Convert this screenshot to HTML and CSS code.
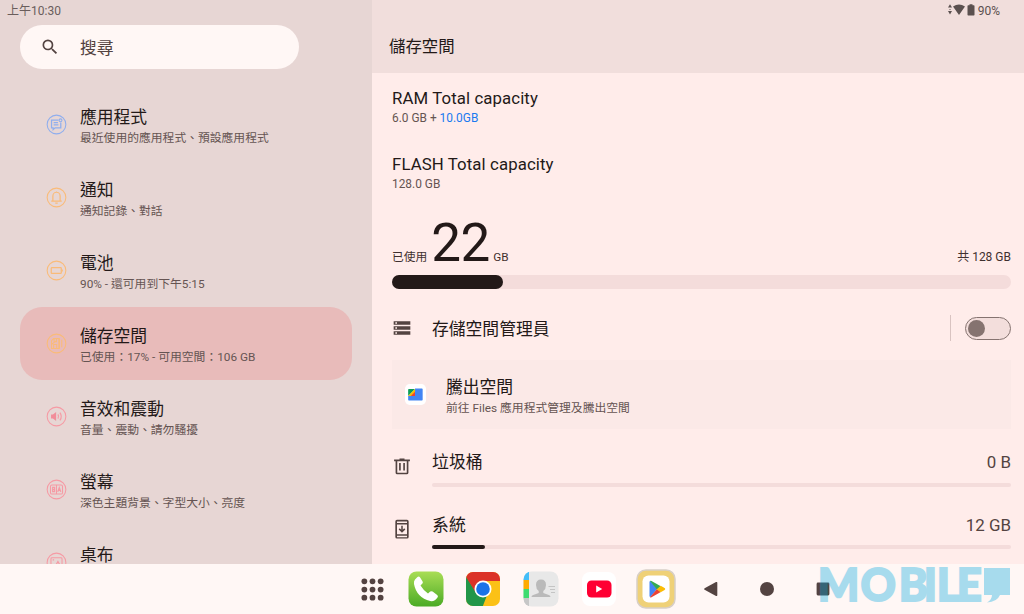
FILE: index.html
```html
<!DOCTYPE html>
<html lang="zh-Hant">
<head>
<meta charset="utf-8">
<title>儲存空間</title>
<link rel="stylesheet" href="styles.css">
</head>
<body>
<div class="screen">
  <div class="panes">
    <aside class="sidebar">
      <div class="status">上午10:30</div>
      <div class="search">
        <svg class="search-icon" viewBox="0 0 24 24"><path d="M15.5 14h-.79l-.28-.27A6.47 6.47 0 0 0 16 9.5 6.5 6.5 0 1 0 9.5 16c1.61 0 3.09-.59 4.23-1.57l.27.28v.79l5 4.99L20.49 19l-4.99-5zm-6 0C7.01 14 5 11.99 5 9.5S7.01 5 9.5 5 14 7.01 14 9.5 11.99 14 9.5 14z"/></svg>
        <span>搜尋</span>
      </div>
      <nav class="menu">
        <div class="item">
          <svg class="ring blue" viewBox="0 0 22 22"><circle cx="11" cy="11" r="9.8"/><path class="mid" d="M13 6.3H5.8v8.2h1.7v1.9l2-1.9h6V9M8 9h4.5M8 11.5h5"/><circle cx="15.2" cy="6.6" r="1.5"/></svg>
          <div><div class="title">應用程式</div><div class="sub">最近使用的應用程式、預設應用程式</div></div>
        </div>
        <div class="item">
          <svg class="ring orange" viewBox="0 0 22 22"><circle cx="11" cy="11" r="9.8"/><path class="mid" d="M5.5 14.8h11M7.2 14.8V9.5a3.8 4 0 0 1 7.6 0v5.3M11 5.5V4.6M9.700 16.800h2.600"/></svg>
          <div><div class="title">通知</div><div class="sub">通知記錄、對話</div></div>
        </div>
        <div class="item">
          <svg class="ring orange" viewBox="0 0 22 22"><circle cx="11" cy="11" r="9.8"/><rect class="mid" x="5.5" y="8" width="10.5" height="6" rx=".7"/><path class="mid" d="M17 10v2"/></svg>
          <div><div class="title">電池</div><div class="sub">90% - 還可用到下午5:15</div></div>
        </div>
        <div class="item selected">
          <svg class="ring orange" viewBox="0 0 22 22"><circle cx="11" cy="11" r="9.8"/><path d="M8 5.8h5.8v10.4H5.8V8zM8.5 6v3.2H11V6M8 16v-4h3.2v4M6 12l5-4"/><path class="mid" d="M13.8 5.8v10.4"/><path d="M16.5 7v8"/></svg>
          <div><div class="title">儲存空間</div><div class="sub">已使用：17% - 可用空間：106 GB</div></div>
        </div>
        <div class="item">
          <svg class="ring pink" viewBox="0 0 22 22"><circle cx="11" cy="11" r="9.8"/><path class="solid" d="M5.300 9h2l3.300-2.700v9.400L7.300 13h-2z"/><path class="mid" d="M12.500 8.800q1.400 2.200 0 4.400M14.600 7q2.800 4 0 8"/></svg>
          <div><div class="title">音效和震動</div><div class="sub">音量、震動、請勿騷擾</div></div>
        </div>
        <div class="item">
          <svg class="ring pink" viewBox="0 0 22 22"><circle cx="11" cy="11" r="9.8"/><rect x="4.7" y="6.2" width="12.6" height="9.6" rx="1.5"/><path d="M11 6.2v9.6"/><path class="mid" d="M7 8.8h2v4.4H7zM7 11h2M12.3 13.5l1.6-4.4 1.6 4.4M13 12h2"/></svg>
          <div><div class="title">螢幕</div><div class="sub">深色主題背景、字型大小、亮度</div></div>
        </div>
        <div class="item">
          <svg class="ring pink" viewBox="0 0 22 22"><circle cx="11" cy="11" r="9.8"/><rect x="5.2" y="6" width="11.6" height="10" rx="1"/><path class="mid" d="M7 8.300h1.500M10.500 13.500l2-3.500 2 3.500"/></svg>
          <div><div class="title">桌布</div></div>
        </div>
      </nav>
    </aside>

    <main class="detail">
      <header class="header">
        <div class="status right">
          <svg class="status-icons" viewBox="0 0 29 14"><path d="M3 1.200 5 4.500H1zM3 11.500 1 8h4zM2.500 6h1v1h-1zM6 3.600Q12-.8 18 3.600L12 12zM22.500 1.200h3v1.100h1.300q.7 0 .7.7v8.800q0 .7-.7.7h-5.600q-.7 0-.7-.7V3q0-.7.7-.7h1.300z"/></svg>
          <span>90%</span>
        </div>
        <h1>儲存空間</h1>
      </header>

      <section class="content">
        <div class="capacity"><div class="title">RAM Total capacity</div><div class="sub">6.0 GB + <span class="extra">10.0GB</span></div></div>
        <div class="capacity"><div class="title">FLASH Total capacity</div><div class="sub">128.0 GB</div></div>

        <div class="usage">
          <span>已使用</span><span class="amount">22</span><span>GB</span><span class="total">共 128 GB</span>
        </div>
        <div class="meter"><div class="meter-fill" style="width:111px"></div></div>

        <div class="manager">
          <svg class="row-icon" viewBox="0 0 24 24"><path d="M2 20h20v-4H2v4zm2-3h2v2H4v-2zM2 4v4h20V4H2zm4 3H4V5h2v2zm-4 7h20v-4H2v4zm2-3h2v2H4v-2z"/></svg>
          <span class="title">存儲空間管理員</span>
          <span class="divider"></span>
          <span class="switch"><span class="knob"></span></span>
        </div>

        <div class="card">
          <svg class="files" viewBox="0 0 22 22"><rect width="22" height="22" rx="5" fill="#fff"/><path d="M10.500 4.700h7.200q.8 0 .8.800v11q0 .8-.8.800H4.100q-.8 0-.8-.8v-4h7.200z" fill="#4285f4"/><path d="M4.100 5.300h6.400L3.300 12.500V6.100q0-.8.800-.8z" fill="#0c9d58"/><path d="M3.300 12.500 10.500 5.300v3.500L6.800 12.500z" fill="#fbbc04"/><path d="M6 12.500 10.500 8v4.500z" fill="#ea4335"/></svg>
          <div><div class="title">騰出空間</div><div class="sub">前往 Files 應用程式管理及騰出空間</div></div>
        </div>

        <div class="category">
          <svg class="row-icon" viewBox="0 0 24 24"><path d="M15 3H9v1.200H2.500v2h1.800V20q0 2 2 2h11.400q2 0 2-2V6.200h1.800v-2H15zm2.700 17H6.300V6.200h11.400zM8.500 8.500h2v9h-2zm5 0h2v9h-2z"/></svg>
          <div class="category-body"><div class="category-line"><span>垃圾桶</span><span>0 B</span></div><div class="bar"></div></div>
        </div>
        <div class="category">
          <svg class="row-icon" viewBox="0 0 24 24"><path d="M18 1H6Q4 1 4 3v18.500q0 2 2 2h12q2 0 2-2V3q0-2-2-2zm0 20.800H6V20h12zm0-3.500H6V6.500h12zM18 4.700H6V2.900h12zM16 12.500l-1.300-1.300-1.800 1.800V8.200h-1.800V13l-1.800-1.800L8 12.500l4 4z"/></svg>
          <div class="category-body"><div class="category-line"><span>系統</span><span>12 GB</span></div><div class="bar"><div class="bar-fill" style="width:53px"></div></div></div>
        </div>
      </section>
    </main>
  </div>

  <footer class="dock">
    <svg class="apps" viewBox="0 0 24 24"><circle cx="3.500" cy="3.500" r="3"/><circle cx="12" cy="3.500" r="3"/><circle cx="20.500" cy="3.500" r="3"/><circle cx="3.500" cy="12" r="3"/><circle cx="12" cy="12" r="3"/><circle cx="20.500" cy="12" r="3"/><circle cx="3.500" cy="20.500" r="3"/><circle cx="12" cy="20.500" r="3"/><circle cx="20.500" cy="20.500" r="3"/></svg>

    <svg class="app" viewBox="0 0 36 36"><defs><linearGradient id="phone" x2="0" y2="1"><stop stop-color="#a9dd55"/><stop offset="1" stop-color="#4bab25"/></linearGradient></defs><rect x=".5" y=".5" width="35" height="35" rx="8" fill="url(#phone)"/><path d="M7 8.500 9.500 6q1.500-1 2.600.5l2.500 4q.7 1.300-.4 2.300l-1.700 1.600q3.200 5.200 7.500 8l2.200-1.800q1.200-.9 2.400 0l4.600 3.300q1.400 1.200.3 2.600-2.700 4.300-7.300 3.600Q8.500 26.500 6 13q-.4-3 1-4.500z" fill="#fff"/></svg>

    <svg class="app" viewBox="0 0 36 36"><defs><clipPath id="tile"><rect x="1" y="1" width="34" height="34" rx="7"/></clipPath></defs><g clip-path="url(#tile)"><path d="M0 0h36v36H0z" fill="#fbc116"/><path d="M1 5 12 23l10.500 0L17.500 36H0V5z" fill="#229648"/><path d="M0 0h36v10H18l-7 12L1 6z" fill="#db3228"/></g><circle cx="18" cy="18" r="8.500" fill="#fff"/><circle cx="18" cy="18" r="6.800" fill="#1a73e8"/></svg>

    <svg class="app" viewBox="0 0 36 36"><defs><clipPath id="book"><rect x=".5" y=".5" width="35" height="35" rx="8"/></clipPath></defs><g clip-path="url(#book)"><path d="M0 0h36v36H0z" fill="#e8e8e8"/><path d="M0 0h6v9H0z" fill="#42bdf8"/><path d="M0 9h6v9H0z" fill="#ffab00"/><path d="M0 18h6v9H0z" fill="#3ddc70"/><path d="M0 27h6v9H0z" fill="#c7c7c7"/></g><path d="M13 14q0-5.500 5-5.500t5 5.500q0 4-2.700 6v2l5.500 2q1.700.7 1.700 2H8.500q0-1.300 1.700-2l5.500-2v-2Q13 18 13 14z" fill="#bababa"/><path d="M25.500 15.500H32M27 18.500h5M28 21.500h4" stroke="#c4c4c4" stroke-width="1.200"/></svg>

    <svg class="app" viewBox="0 0 36 36"><rect x="1" y="1" width="34" height="34" rx="8" fill="#fff"/><rect x="6" y="9.500" width="24.500" height="17" rx="4.500" fill="#ff0033"/><path d="M15.200 14.500v7l6-3.500z" fill="#fff"/></svg>

    <svg class="play" viewBox="0 0 40 40"><rect x="1" y="1" width="38" height="38" rx="9" fill="#efd177" stroke="#d8cfc6" stroke-width="1.500"/><rect x="6.500" y="6.500" width="27" height="27" rx="6" fill="#fff"/><path d="M13.500 13v14q.3 1.400 1 1L21 20l-6.500-8q-.8-.2-1 1z" fill="#4285f4"/><path d="M14 12q.6-.3 1.500.1l9.300 5.200-3.800 3.400z" fill="#34a853"/><path d="m14 28.300 7-8.300 3.800 3.100-9.300 5.200q-.9.400-1.500 0z" fill="#ea4335"/><path d="m20.800 20.200 3.900-3.400 3.900 2.300q1.400 1 0 1.900l-3.900 2.300z" fill="#fbbc04"/></svg>

    <svg class="nav" viewBox="0 0 14 14"><path d="M.6 6.200 12 0q1.300-.4 1.300 1v12q0 1.400-1.300 1L.6 7.800Q-.4 7 .6 6.200z"/></svg>
    <svg class="nav" viewBox="0 0 14 14"><circle cx="7" cy="7" r="7"/></svg>
    <svg class="nav" viewBox="0 0 14 14"><rect x=".6" y=".6" width="12.800" height="12.800" rx="1.300"/></svg>

    <svg class="watermark" viewBox="0 0 212 50"><g transform="scale(.95 1)"><text y="37.300" x="6.100 51 91.400 117.700 131.400 152.400">MOBILE</text></g><path d="M172 4h26v27h-10q-3 7-13 7.500 5-3 5-7.500h-8z"/></svg>
  </footer>
</div>
</body>
</html>
```

FILE: styles.css
```css
* { box-sizing: border-box; }
body { margin: 0; font-family: Roboto, "Noto Sans CJK TC", sans-serif; color: #231918; }
.screen { width: 1024px; height: 614px; overflow: hidden; display: flex; flex-direction: column; background: #fff7f5; }
.panes { height: 564px; display: flex; overflow: hidden; }

.sidebar { width: 372px; flex: none; background: #e7d6d4; padding: 0 20px; }
.status { height: 25px; padding-top: 2px; margin-left: -13px; font-size: 12px; line-height: 18px; color: #6a5d5c; }
.search { width: 279px; height: 43.500px; border-radius: 22px; background: #fff7f5; display: flex; align-items: center; gap: 20px; padding-left: 20px; font-size: 16.800px; color: #534341; }
.search-icon { width: 20px; height: 20px; fill: #534341; }
.menu { padding-top: 19px; }
.item { height: 73.150px; display: flex; padding: 18px 0 0 26px; gap: 13px; border-radius: 22px; }
.selected { background: #e8bbba; }
.title { font-size: 16.800px; line-height: 23px; white-space: nowrap; }
.sub { font-size: 11.800px; line-height: 18px; color: #655452; white-space: nowrap; }
.ring { width: 21px; height: 21px; flex: none; margin-top: 8px; fill: none; stroke-width: 1.100; }
.ring .mid { stroke-width: 1.300; }
.blue { stroke: #8faeee; }
.orange { stroke: #fabb78; }
.pink { stroke: #f69aa4; }
.pink .solid { fill: #f28d99; stroke: none; }

.detail { flex: 1; background: #ffecea; }
.header { height: 73px; background: #f1dedc; padding-left: 17px; }
.right { margin: 0; display: flex; justify-content: flex-end; padding-right: 24px; gap: 2px; color: #5b504f; }
.status-icons { width: 29px; height: 14px; margin-top: 1px; fill: #5b504f; }
h1 { margin: 8px 0 0; font-size: 16.400px; line-height: 27px; font-weight: 400; }
.content { padding: 0 13px 0 20px; }
.capacity { height: 65.500px; padding-top: 14px; }
.capacity .title { letter-spacing: .1px; }
.capacity .sub { line-height: 16px; font-size: 11.900px; }
.extra { color: #1a7af0; }
.usage { height: 71px; padding-top: 9px; display: flex; align-items: baseline; font-size: 11.750px; color: #3f302f; }
.amount { font-size: 53px; line-height: 60px; margin: 0 3.500px 0 4px; letter-spacing: -.5px; color: #231918; }
.total { margin-left: auto; font-size: 12px; }
.meter { height: 14px; border-radius: 7px; background: #f4dcdb; }
.meter-fill { height: 14px; border-radius: 7px; background: #231918; }
.manager { height: 71px; display: flex; align-items: center; }
.manager .title { margin-left: 20px; padding-top: 9px; }
.row-icon { width: 20px; height: 20px; fill: #534341; flex: none; }
.manager .row-icon { margin-top: 7px; }
.divider { width: 1px; height: 26px; background: #d9c3c1; margin: 7px 14px 0 auto; }
.switch { width: 46px; height: 23px; border: 1.500px solid #857370; border-radius: 12px; background: #f3dedc; margin-top: 7px; padding: 2px; }
.knob { display: block; width: 17px; height: 17px; border-radius: 50%; background: #857370; }
.card { height: 69px; background: #fbe9e7; display: flex; gap: 20px; padding: 16px 13px; }
.files { width: 21px; height: 21px; margin-top: 8px; flex: none; }
.category { height: 62.500px; padding-top: 20px; display: flex; gap: 20px; }
.category .row-icon { margin-top: 7px; }
.category-body { flex: 1; }
.category-line { display: flex; justify-content: space-between; font-size: 16.900px; line-height: 26px; height: 33.500px; }
.category-line span:last-child { color: #534341; }
.bar { height: 4px; border-radius: 2px; background: #f4dcdb; }
.bar-fill { height: 4px; border-radius: 2px; background: #231918; }

.dock { height: 50px; position: relative; padding-left: 347.500px; display: grid; grid-template-columns: 49px 58px 57.300px 58px 58px 57.200px 52px 60px 53px; align-items: center; justify-items: center; background: #fff7f5; }
.apps { width: 23px; height: 23px; fill: #534341; }
.app { width: 36px; height: 36px; }
.play { width: 40px; height: 40px; }
.nav { width: 14px; height: 14px; fill: #534341; }
.watermark { position: absolute; left: 812px; top: 0; width: 212px; height: 50px; fill: #00a8e0; stroke: #00a8e0; stroke-width: 0; opacity: .34; font: 900 46px Lato, sans-serif; }
.watermark text { stroke-width: 2px; }
```
